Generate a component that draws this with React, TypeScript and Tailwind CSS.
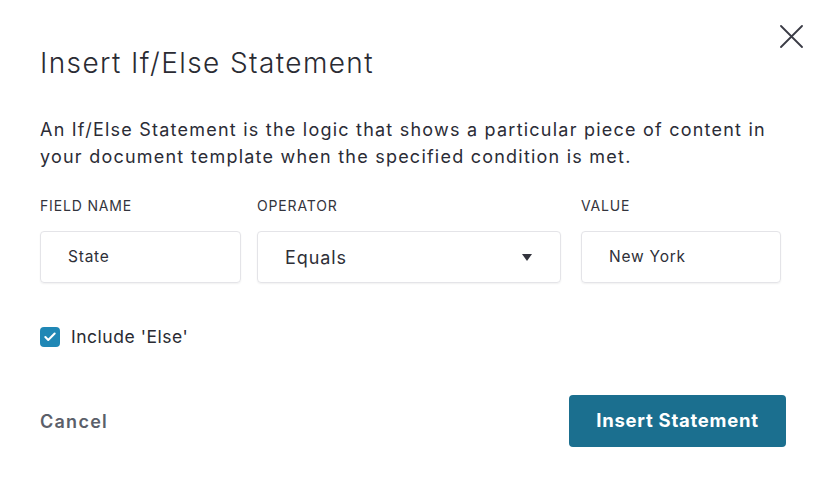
import { Check } from "lucide-react";

const font = { fontFamily: "Inter, 'Noto Sans', sans-serif" };

const Field = ({ label, value, className = "" }: { label: string; value: string; className?: string }) => (
  <div className={`flex flex-col ${className}`}>
    <span className="text-[14px] tracking-[0.06em] uppercase text-[#33343d] leading-none mb-[18px]">{label}</span>
    <div className="h-[52px] rounded-[4px] border border-[#e4e4e8] shadow-[0_1px_2px_rgba(0,0,0,0.06)] flex items-center px-[27px] text-[15.5px] tracking-[0.05em] text-[#2e2f38]">
      {value}
    </div>
  </div>
);

const App = () => {
  return (
    <div className="w-[826px] h-[486px] bg-white relative overflow-hidden" style={font}>
      <button className="absolute top-[25px] right-[23px] text-[#3a3b45]">
        <svg width="23" height="23" viewBox="0 0 23 23" fill="none" stroke="currentColor" strokeWidth="1.8" strokeLinecap="round">
          <path d="M1 1L22 22M22 1L1 22" />
        </svg>
      </button>

      <div className="flex flex-col pl-[40px] pr-[40px] pt-[46px]">
        <h1 className="text-[28px] font-light tracking-[0.05em] text-[#2a2b33] leading-[34px]">Insert If/Else Statement</h1>

        <p className="mt-[36px] text-[18px] tracking-[0.068em] leading-[27px] text-[#2b2c36]">
          An If/Else Statement is the logic that shows a particular piece of content in
          <br />
          your document template when the specified condition is met.
        </p>

        <div className="flex mt-[29px]">
          <Field label="Field Name" value="State" className="w-[201px]" />
          <div className="flex flex-col w-[304px] ml-[16px]">
            <span className="text-[14px] tracking-[0.06em] uppercase text-[#33343d] leading-none mb-[18px]">Operator</span>
            <div className="h-[52px] rounded-[4px] border border-[#e4e4e8] shadow-[0_1px_2px_rgba(0,0,0,0.06)] flex items-center justify-between pl-[27px] pr-[28px] text-[18px] tracking-[0.05em] text-[#2e2f38]">
              <span>Equals</span>
              <svg width="10" height="7" viewBox="0 0 10 7">
                <path d="M0 0h10L5 7z" fill="#33343d" />
              </svg>
            </div>
          </div>
          <Field label="Value" value="New York" className="w-[200px] ml-[20px]" />
        </div>

        <label className="flex items-center mt-[41px]">
          <span className="w-[20px] h-[20px] rounded-[4px] bg-[#1f87b5] flex items-center justify-center">
            <Check className="w-[14px] h-[14px] text-white" strokeWidth={3.5} />
          </span>
          <span className="ml-[11px] text-[17.5px] tracking-[0.03em] text-[#2a2b33]">Include 'Else'</span>
        </label>

        <div className="flex items-center justify-between mt-[45px]">
          <button className="text-[18px] tracking-[0.07em] font-semibold text-[#5b5f6a]">Cancel</button>
          <button className="w-[217px] h-[52px] rounded-[4px] bg-[#1b6f8f] text-white text-[18.5px] tracking-[0.04em] font-bold">
            Insert Statement
          </button>
        </div>
      </div>
    </div>
  );
};

export default App;
